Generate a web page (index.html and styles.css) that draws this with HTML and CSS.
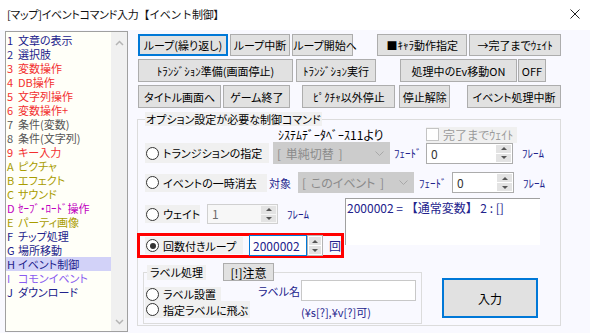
FILE: index.html
```html
<!DOCTYPE html>
<html lang="ja">
<head>
    <meta charset="UTF-8">
    <title>[マップ]イベントコマンド入力 【イベント制御】</title>
    <link rel="stylesheet" href="styles.css">
</head>
<body>
    <div class="titlebar">
        <span class="title">[マップ]イベントコマンド入力<span class="title-tag">【イベント制御】</span></span>
        <svg class="close" width="10" height="10" viewBox="0 0 10 10"><path d="M0.5 0.5 L9.5 9.5 M9.5 0.5 L0.5 9.5" stroke="#222" stroke-width="1" fill="none"/></svg>
    </div>

    <div class="client">
        <!-- command category list -->
        <div class="cmd-list">
            <ul class="items">
                <li class="navy"><span class="key">1</span>文章の表示</li>
                <li class="navy"><span class="key">2</span>選択肢</li>
                <li class="red"><span class="key">3</span>変数操作</li>
                <li class="red"><span class="key">4</span>DB操作</li>
                <li class="red"><span class="key">5</span>文字列操作</li>
                <li class="red"><span class="key">6</span>変数操作+</li>
                <li class="gray"><span class="key">7</span>条件(変数)</li>
                <li class="gray"><span class="key">8</span>条件(文字列)</li>
                <li class="red"><span class="key">9</span>キー入力</li>
                <li class="olive"><span class="key">A</span>ピクチャ</li>
                <li class="olive"><span class="key">B</span>エフェクト</li>
                <li class="olive"><span class="key">C</span>サウンド</li>
                <li class="magenta"><span class="key">D</span>ｾｰﾌﾞ・ﾛｰﾄﾞ操作</li>
                <li class="olive"><span class="key">E</span>パーティ画像</li>
                <li class="navy"><span class="key">F</span>チップ処理</li>
                <li class="navy"><span class="key">G</span>場所移動</li>
                <li class="navy selected"><span class="key">H</span>イベント制御</li>
                <li class="violet"><span class="key">I</span>コモンイベント</li>
                <li class="navy"><span class="key">J</span>ダウンロード</li>
            </ul>
            <div class="scrollbar">
                <svg width="9" height="6" viewBox="0 0 9 6"><path d="M1 5 L4.5 1.5 L8 5" stroke="#b4b4b4" stroke-width="1.5" fill="none"/></svg>
                <svg width="9" height="6" viewBox="0 0 9 6"><path d="M1 1 L4.5 4.5 L8 1" stroke="#b4b4b4" stroke-width="1.5" fill="none"/></svg>
            </div>
        </div>

        <div class="panel">
            <div class="btn-row">
                <button class="btn focus b-loop">ループ(繰り返し)</button>
                <button class="btn b-break">ループ中断</button>
                <button class="btn b-start">ループ開始へ</button>
                <button class="btn b-chara">■ｷｬﾗ動作指定</button>
                <button class="btn b-wait">→完了までｳｪｲﾄ</button>
            </div>
            <div class="btn-row row2">
                <button class="btn b-tprep">ﾄﾗﾝｼﾞｼｮﾝ準備(画面停止)</button>
                <button class="btn b-texec">ﾄﾗﾝｼﾞｼｮﾝ実行</button>
                <button class="btn b-evon">処理中のEv移動ON</button>
                <button class="btn b-off">OFF</button>
            </div>
            <div class="btn-row row3">
                <button class="btn b-title">タイトル画面へ</button>
                <button class="btn b-end">ゲーム終了</button>
                <button class="btn b-pict">ﾋﾟｸﾁｬ以外停止</button>
                <button class="btn b-unstop">停止解除</button>
                <button class="btn b-evstop">イベント処理中断</button>
            </div>

            <fieldset class="options">
                <legend>オプション設定が必要な制御コマンド</legend>

                <div class="opt-top">
                    <span class="caption">ｼｽﾃﾑﾃﾞｰﾀﾍﾞｰｽ11より</span>
                    <label class="check-area"><span class="check"></span>完了までｳｪｲﾄ</label>
                </div>

                <div class="opt-row row-trans">
                    <label class="radio r-trans"><span class="dot"></span>トランジションの指定</label>
                    <div class="combo c-trans"><span>[ 単純切替 ]</span><svg width="9" height="5" viewBox="0 0 9 5"><path d="M0.5 0.5 L4.5 4.5 L8.5 0.5" stroke="#a8a8a8" fill="none"/></svg></div>
                    <span class="lbl l-fade1">ﾌｪｰﾄﾞ</span>
                    <div class="spin s-fade1"><span class="spin-val">0</span><span class="spin-btns"><span class="up"></span><span class="down"></span></span></div>
                    <span class="lbl l-frame">ﾌﾚｰﾑ</span>
                </div>

                <div class="opt-row row-erase">
                    <label class="radio r-erase"><span class="dot"></span>イベントの一時消去</label>
                    <span class="lbl l-target">対象</span>
                    <div class="combo c-erase"><span>[ このイベント ]</span><svg width="9" height="5" viewBox="0 0 9 5"><path d="M0.5 0.5 L4.5 4.5 L8.5 0.5" stroke="#a8a8a8" fill="none"/></svg></div>
                    <span class="lbl l-fade2">ﾌｪｰﾄﾞ</span>
                    <div class="spin s-fade2"><span class="spin-val">0</span><span class="spin-btns"><span class="up"></span><span class="down"></span></span></div>
                    <span class="lbl l-frame">ﾌﾚｰﾑ</span>
                </div>

                <div class="mid">
                    <div class="mid-left">
                        <div class="row-wait">
                            <label class="radio r-wait"><span class="dot"></span>ウェイト</label>
                            <div class="spin wait-spin"><span class="spin-val">1</span><span class="spin-btns"><span class="up"></span><span class="down"></span></span></div>
                            <span class="lbl l-frame">ﾌﾚｰﾑ</span>
                        </div>
                        <div class="loop-box">
                            <label class="radio r-loop"><span class="dot on"></span>回数付きループ</label>
                            <div class="spin loop-spin"><span class="spin-val">2000002</span><span class="spin-btns"><span class="up"></span><span class="down"></span></span></div>
                            <span class="lbl l-times">回</span>
                        </div>
                    </div>
                    <div class="result">2000002 = 【通常変数】 2 : []</div>
                </div>

                <div class="label-row">
                    <fieldset class="label-group">
                        <legend><span class="lg-text">ラベル処理</span><button class="btn b-note">[!]注意</button></legend>
                        <div class="label-body">
                            <div class="label-radios">
                                <label class="radio r-set"><span class="dot"></span>ラベル設置</label>
                                <label class="radio r-jump"><span class="dot"></span>指定ラベルに飛ぶ</label>
                            </div>
                            <div class="label-name">
                                <div class="name-row">
                                    <span class="lbl l-name">ラベル名</span>
                                    <div class="name-input"></div>
                                </div>
                                <div class="lbl name-note">(¥s[?],¥v[?]可)</div>
                            </div>
                        </div>
                    </fieldset>
                    <button class="btn focus b-enter">入力</button>
                </div>
            </fieldset>
        </div>
    </div>
</body>
</html>
```

FILE: styles.css
```css
* {
    box-sizing: border-box;
    margin: 0;
    padding: 0;
}

body {
    width: 590px;
    height: 333px;
    overflow: hidden;
    background-color: #f9f9ff;
    font-family: "Noto Sans CJK JP", sans-serif;
    font-size: 11px;
    font-feature-settings: "palt";
    color: #000;
}

/* window title */
.titlebar {
    height: 30px;
    background-color: #fff;
    display: flex;
    align-items: center;
    justify-content: space-between;
    padding: 0 10px 2px 7px;
    font-size: 11px;
    letter-spacing: -0.3px;
    color: #111;
}

.title-tag {
    font-feature-settings: normal;
}

.close {
    display: block;
}

.client {
    display: flex;
    align-items: flex-start;
    padding: 1px 0 0 5px;
}

/* left list */
.cmd-list {
    width: 123px;
    height: 301px;
    border: 1px solid #a0a0a0;
    background-color: #fffff8;
    display: flex;
}

.items {
    list-style: none;
    flex: 1;
    padding-top: 1px;
}

.items li {
    height: 14px;
    line-height: 14px;
    padding-left: 1px;
    white-space: nowrap;
    overflow: hidden;
}

.items .key {
    display: inline-block;
    width: 11px;
}

.items li.selected {
    background-color: #d2d2f8;
}

.navy { color: #22228c; }
.red { color: #f23030; }
.gray { color: #555; }
.olive { color: #a89c00; }
.magenta { color: #c000c0; }
.violet { color: #8a5cf0; }

.scrollbar {
    width: 16px;
    background-color: #f0f0f0;
    display: flex;
    flex-direction: column;
    justify-content: space-between;
    align-items: center;
    padding: 8px 0 6px;
}

.scrollbar svg {
    display: block;
}

/* right side */
.panel {
    margin-left: 9px;
    width: 424px;
    padding-top: 3px;
}

.btn-row {
    display: flex;
    height: 22px;
    padding-left: 1px;
}

.btn-row.row2,
.btn-row.row3 {
    height: 23px;
    margin-top: 3px;
}

.btn {
    height: 100%;
    background-color: #e1e1e1;
    border: 1px solid #adadad;
    font: inherit;
    color: #000;
    white-space: nowrap;
    padding: 0;
}

.btn.focus {
    border: 2px solid #0078d7;
}

.b-loop { width: 91px; }
.b-break { width: 61px; margin-left: 2px; }
.b-start { width: 61px; margin-left: 2px; }
.b-chara { width: 91px; margin-left: 24px; }
.b-wait { width: 93px; margin-left: 2px; }

.b-tprep { width: 155px; }
.b-texec { width: 80px; margin-left: 3px; }
.b-evon { width: 117px; margin-left: 24px; }
.b-off { width: 28px; margin-left: 1px; }

.b-title { width: 84px; }
.b-end { width: 68px; margin-left: 2px; }
.b-pict { width: 94px; margin-left: 12px; }
.b-unstop { width: 51px; margin-left: 4px; }
.b-evstop { width: 95px; margin-left: 17px; }

/* option group */
.options {
    margin-top: 4px;
    width: 424px;
    height: 214px;
    border: 1px solid #dcdcdc;
    padding: 1px 0 0 7px;
}

.options > legend {
    padding: 0 1px;
    line-height: 14px;
    background-color: #f0f0f0;
}

.opt-top {
    display: flex;
    align-items: center;
    height: 15px;
}

.caption {
    margin-left: 133px;
    width: 148px;
    font-size: 12px;
    line-height: 14px;
    white-space: nowrap;
}

.check-area {
    width: 91px;
    height: 16px;
    background-color: #f0f0f0;
    display: flex;
    align-items: center;
    color: #9a9a9a;
    font-size: 12px;
    white-space: nowrap;
}

.check {
    width: 13px;
    height: 13px;
    border: 1px solid #c4c4c4;
    background-color: #fff;
    margin-right: 4px;
    flex: none;
}

.opt-row {
    display: flex;
    align-items: center;
}

.row-trans { height: 22px; }
.row-erase { height: 21px; margin-top: 8px; }

.radio {
    display: flex;
    align-items: center;
    background-color: #f0f0f0;
    padding-left: 1px;
    white-space: nowrap;
    flex: none;
}

.radio .dot {
    width: 13px;
    height: 13px;
    border: 1px solid #333;
    border-radius: 50%;
    background-color: #fff;
    margin-right: 4px;
    display: flex;
    align-items: center;
    justify-content: center;
    flex: none;
}

.radio .dot.on::after {
    content: "";
    width: 6px;
    height: 6px;
    border-radius: 50%;
    background-color: #333;
}

.r-trans { width: 124px; height: 20px; }
.r-erase { width: 122px; height: 18px; }
.r-wait { width: 55px; height: 18px; }
.r-loop { width: 98px; height: 17px; }
.r-set { width: 76px; height: 14px; }
.r-jump { width: 105px; height: 17px; }

.lbl {
    color: #22228c;
    white-space: nowrap;
    flex: none;
}

.l-fade1 { width: 32px; margin-left: 4px; }
.l-fade2 { width: 33px; margin-left: 5px; }
.l-frame { margin-left: 9px; }
.l-target { width: 29px; margin-left: 2px; }
.l-times { margin-left: 6px; font-size: 12px; }

.combo {
    display: flex;
    align-items: center;
    justify-content: space-between;
    background-color: #cccccc;
    color: #8a8a8a;
    padding: 0 6px 0 4px;
    font-size: 12px;
    word-spacing: 2px;
    white-space: nowrap;
    flex: none;
}

.combo svg {
    display: block;
}

.c-trans { width: 117px; height: 22px; margin-left: 4px; }
.c-erase { width: 116px; height: 21px; }

/* spin edits */
.spin {
    display: flex;
    height: 21px;
    border: 1px solid #acacac;
    background-color: #fff;
    padding: 1px;
    flex: none;
}

.spin-val {
    flex: 1;
    padding-left: 3px;
    line-height: 17px;
    color: #333;
    font-size: 12px;
}

.spin-btns {
    width: 15px;
    display: flex;
    flex-direction: column;
    gap: 1px;
}

.spin-btns span {
    flex: 1;
    background-color: #e3e3e3;
    display: flex;
    align-items: center;
    justify-content: center;
}

.spin-btns .up::before {
    content: "";
    border-left: 3px solid transparent;
    border-right: 3px solid transparent;
    border-bottom: 3px solid #555;
}

.spin-btns .down::before {
    content: "";
    border-left: 3px solid transparent;
    border-right: 3px solid transparent;
    border-top: 3px solid #555;
}

.s-fade1 { width: 87px; }
.s-fade2 { width: 62px; }

.wait-spin {
    width: 71px;
    height: 20px;
    margin-left: 7px;
    background-color: #f7f7f7;
    border-color: #d0d0d0;
}

.wait-spin .spin-val {
    color: #6d6d6d;
    line-height: 16px;
}

.loop-spin {
    width: 74px;
    margin-left: 6px;
    border: none;
    padding: 0;
    background: none;
}

.loop-spin .spin-val {
    flex: none;
    width: 58px;
    border: 1px solid #0078d7;
    background-color: #fff;
    color: #22228c;
    line-height: 19px;
}

.loop-spin .spin-btns {
    width: 16px;
    border: 1px solid #b4b4b4;
    background-color: #fff;
    padding: 1px;
}

/* wait / loop block */
.mid {
    display: flex;
    margin: 5px 0 0 -8px;
}

.mid-left {
    width: 207px;
    padding-top: 6px;
}

.row-wait {
    display: flex;
    align-items: center;
    height: 20px;
    padding-left: 8px;
}

.loop-box {
    display: flex;
    align-items: center;
    margin-top: 9px;
    height: 25px;
    border: 3px solid #ff0000;
    padding-left: 5px;
}

.result {
    margin-left: 1px;
    width: 195px;
    height: 47px;
    border-top: 1px solid #a0a0a0;
    border-left: 1px solid #a0a0a0;
    background-color: #fff;
    padding: 1px 0 0 1px;
    color: #22228c;
    font-size: 12px;
    font-feature-settings: normal;
    line-height: 16px;
    white-space: nowrap;
}

/* label group */
.label-row {
    display: flex;
    align-items: flex-start;
    margin: 5px 0 0 -2px;
}

.label-group {
    width: 279px;
    height: 61px;
    border: 1px solid #dcdcdc;
    padding: 0 0 0 3px;
}

.label-group > legend {
    display: flex;
    align-items: center;
    padding: 0;
}

.lg-text {
    background-color: #f0f0f0;
    padding: 0 3px;
    line-height: 15px;
}

.b-note {
    width: 51px;
    height: 18px;
    margin-left: 17px;
    font-size: 12px;
}

.label-body {
    display: flex;
}

.label-radios {
    width: 105px;
    margin-left: -2px;
    padding-top: 6px;
}

.label-name {
    margin-left: 8px;
}

.name-row {
    display: flex;
    align-items: center;
    margin-top: -1px;
}

.l-name {
    width: 43px;
}

.name-input {
    width: 115px;
    height: 21px;
    border: 1px solid #c8c8c8;
    background-color: #fff;
}

.name-note {
    margin: 4px 0 0 43px;
    line-height: 14px;
}

.b-enter {
    width: 96px;
    height: 40px;
    margin: 15px 0 0 20px;
    font-size: 12px;
}
```
